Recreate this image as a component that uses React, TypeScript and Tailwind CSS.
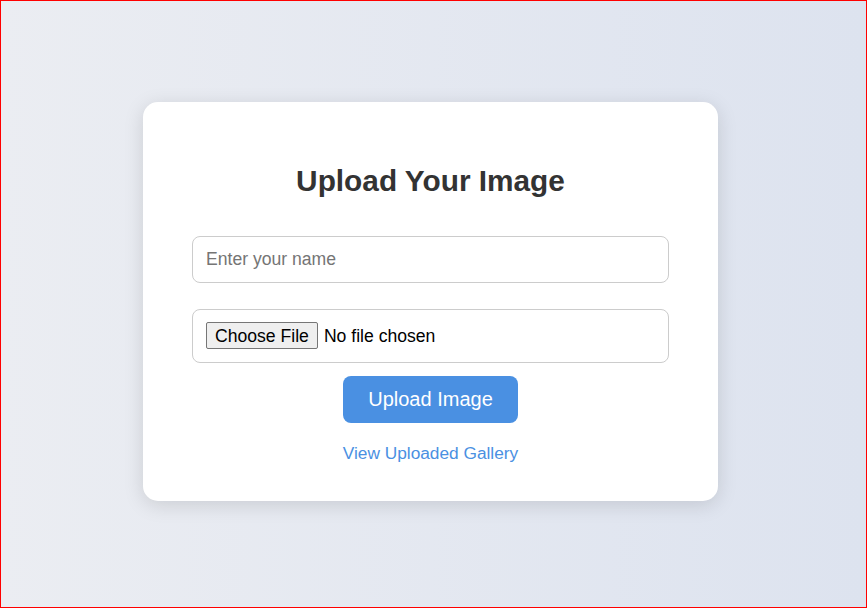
export default function App() {
  return (
    <div className="h-screen w-full border border-[#ff0000] bg-linear-to-r from-[#ebedf2] to-[#dde3ef] flex items-center justify-center pr-[6px] pb-[5px] font-['Liberation_Sans',Arial,sans-serif]">
      <div className="w-[575px] bg-white rounded-[15px] shadow-[0_4px_20px_rgba(0,0,0,0.13)] px-[49px] pt-[40px] pb-[37px] flex flex-col items-center">
        <h2 className="mt-[22px] text-[29.8px] leading-[34px] font-bold text-[#333333]">Upload Your Image</h2>

        <input
          type="text"
          placeholder="Enter your name"
          className="mt-[38px] w-full h-[47px] px-[13px] border border-[#cccccc] rounded-[8px] text-[17.6px] text-[#333] placeholder:text-[#757575] outline-none"
        />

        <div className="mt-[26px] w-full h-[54px] px-[13px] border border-[#cccccc] rounded-[8px] flex items-center">
          <input
            type="file"
            className="text-[17.6px] text-black file:mr-[6px] file:px-[8px] file:h-[27px] file:border file:border-[#767676] file:rounded-[2px] file:bg-[#efefef] file:text-black file:font-['Liberation_Sans',Arial,sans-serif]"
          />
        </div>

        <button className="mt-[13px] w-[175px] h-[47px] pb-[1px] bg-[#4a90e2] rounded-[8px] text-white text-[20px]">
          Upload Image
        </button>

        <a href="#" className="mt-[19px] text-[17.3px] leading-[22px] text-[#4a90e2]">
          View Uploaded Gallery
        </a>
      </div>
    </div>
  );
}
